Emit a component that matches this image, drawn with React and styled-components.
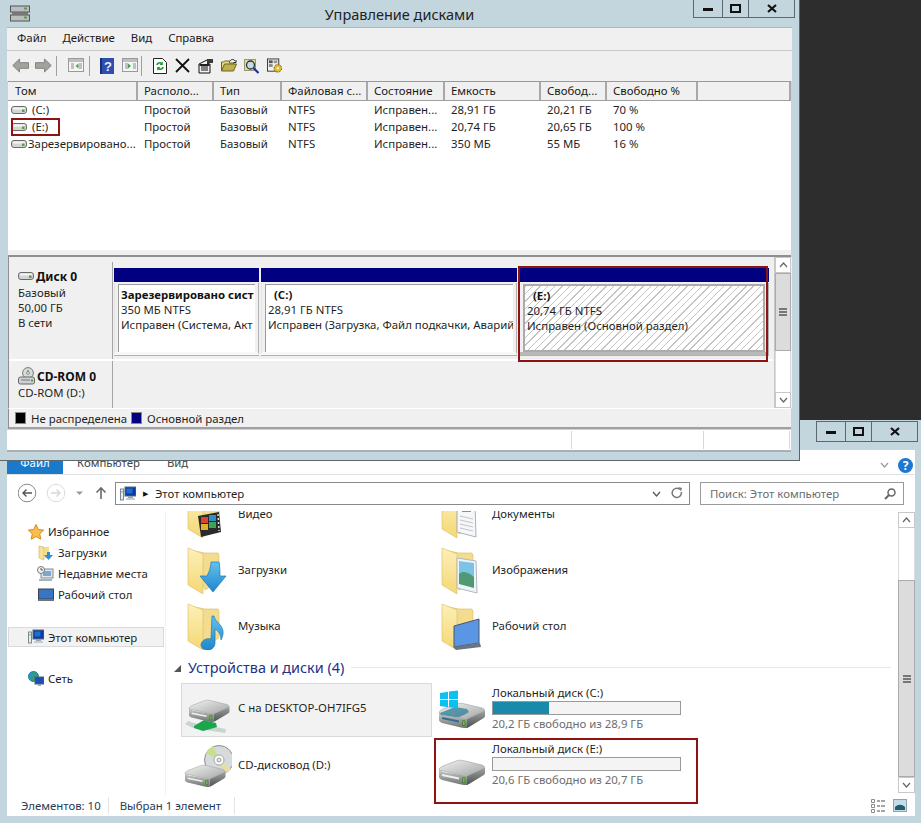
import React from "react";
import styled, { createGlobalStyle } from "styled-components";

const Global = createGlobalStyle`
  html, body { margin: 0; padding: 0; background: #2d2d2d; overflow: hidden; }
  * { box-sizing: border-box; }
  body { font-family: "Noto Sans", "Open Sans", sans-serif; font-size: 11.4px; color: #1a1a1a; }
`;

const Desktop = styled.div`
  position: relative; width: 921px; height: 823px; overflow: hidden; background: #2d2d2d;
`;

/* windows on the desktop */
const DiskWindow = styled.section`
  position: absolute; left: 0; top: 0; width: 800px; height: 461px; z-index: 2;
  background: #c3d6de; border-right: 1px solid #566; border-bottom: 1px solid #5c686e;
  display: flex; flex-direction: column; padding: 0 7px 0 7px;
`;
const ExplorerWindow = styled.section`
  position: absolute; left: 0; top: 420px; width: 921px; height: 403px; z-index: 1;
  background: #c3d6de; display: flex; flex-direction: column; padding: 0 6px 7px 7px;
`;

const TitleBar = styled.header`
  height: 28px; flex: none; position: relative; display: flex; justify-content: center; align-items: center;
  font-size: 14.5px; color: #222; border-bottom: 1px solid #a9b9c0;
`;
const AppGlyph = styled.span`
  position: absolute; left: 2px; top: 5px; display: flex;
`;
const WinButtons = styled.div`
  position: absolute; display: flex; height: ${p => p.$h}px; top: ${p => p.$top}px; left: ${p => p.$left}px;
  border: 1px solid #5c686e; border-top: ${p => (p.$top === 0 ? "none" : "1px solid #5c686e")}; background: #c3d6de;
`;
const WinButton = styled.span`
  width: ${p => p.$w}px; display: flex; align-items: center; justify-content: center;
  & + & { border-left: 1px solid #5c686e; }
`;

const MenuBar = styled.nav`
  height: 23px; flex: none; background: #f0f0f0; border-bottom: 1px solid #c9c9c9;
  display: flex; align-items: center; padding: 0 0 3px 10px; gap: 16px;
`;
const ToolBar = styled.div`
  height: 30px; flex: none; background: #f0f0f0; display: flex; align-items: center; padding-left: 5px;
`;
const ToolSep = styled.span`
  width: 1px; height: 20px; background: #a0a0a0; margin: 0 ${p => p.$r ?? 11}px 0 ${p => p.$l ?? 4}px;
`;
const ToolIcon = styled.span`
  display: flex; width: ${p => p.$w ?? 16}px; height: 16px; margin-right: ${p => p.$m ?? 7}px;
`;

const ListPane = styled.div`
  height: 169px; flex: none; background: #fff; margin: 0 1px 0 1px; display: flex; flex-direction: column;
`;
const colTemplate = "130px 76px 68px 86px 77px 96px 66px 91px 1fr";
const ListHeader = styled.div`
  display: grid; grid-template-columns: ${colTemplate}; height: 20px; flex: none;
  background: #f0f0f0; border-top: 1px solid #9a9a9a; border-bottom: 1px solid #a0a0a0;
`;
const HeadCell = styled.span`
  padding-left: 6px; border-right: 2px solid #a8a8a8; line-height: 18px; white-space: nowrap; overflow: hidden;
  &:first-child { padding-left: 7px; }
`;
const ListRow = styled.div`
  display: grid; grid-template-columns: ${colTemplate}; height: 17px; line-height: 17px;
`;
const ListCell = styled.span`
  padding-left: 6px; white-space: nowrap; overflow: hidden; color: #1f1f1f;
`;
const VolumeCell = styled(ListCell)`
  display: flex; align-items: center; padding-left: 3px; gap: ${p => p.$gap}px;
`;

const Splitter = styled.div`
  height: 7px; flex: none; background: #f0f0f0; border-bottom: 2px solid #8f8f8f; margin: 0 1px;
`;
const DiskPane = styled.div`
  height: 151px; flex: none; display: flex; margin-left: 1px; background: #f0f0f0;
  border-left: 1px solid #8f8f8f;
`;
const DiskColumn = styled.div`
  flex: 1; min-width: 0; display: flex; flex-direction: column;
`;
const DiskRow = styled.div`
  display: flex; height: ${p => p.$h}px; flex: none; padding-top: ${p => p.$pt ?? 0}px;
  border-bottom: ${p => (p.$line ? "2px solid #fff" : "none")};
`;
const DiskLabel = styled.div`
  width: 104px; flex: none; padding: ${p => p.$pt ?? 6}px 0 0 9px; border-right: 1px solid #a4a4a4; line-height: 15px; color: #1f1f1f;
`;
const DiskName = styled.div`
  display: flex; align-items: center; gap: 2px; font-weight: 700; font-size: 12px; height: 16px; margin-bottom: 1px; color: #111;
`;
const PartitionStrip = styled.div`
  flex: 1; display: flex; gap: 2px; padding: 6px 0 0 1px;
`;
const Partition = styled.div`
  width: ${p => p.$w}px; flex: none; display: flex; flex-direction: column;
`;
const PartitionBar = styled.div`
  height: 14px; background: #000080; flex: none;
`;
const PartitionBody = styled.div`
  margin-top: 1px; height: 72px; padding: 1px 3px 0 3px;
  border-bottom: ${p => (p.$sel ? "3px solid #b9b9b9" : "3px solid #f8f8f8")};
  border-right: 1px solid #b0b0b0; border-left: 1px solid #e4e4e4;
  box-shadow: 0 1px 0 #b0b0b0;
`;
const PartitionBox = styled.div`
  height: 68px; line-height: 15px; white-space: nowrap; overflow: hidden; color: #1f1f1f; padding: 2px 0 0 2px;
  background: #fff; border-left: 1px solid #9a9a9a; border-top: 1px solid #9a9a9a;
`;
const HatchBox = styled(PartitionBox)`
  border: 2px solid #ababab;
  background: repeating-linear-gradient(135deg, #c4c4c4 0 1px, #fff 1px 5.2px);
`;
const PartitionTitle = styled.div`
  font-weight: 700; padding-left: ${p => p.$pad ?? 0}px; color: #111;
`;
const PartScroll = styled.div`
  width: 17px; flex: none; margin: 0 1px; display: flex; flex-direction: column; background: #fff; border-left: 1px solid #c8c8c8;
`;
const ScrollArrow = styled.div`
  height: 16px; flex: none; background: #fff; border: 1px solid #c8c8c8; display: flex; align-items: center; justify-content: center;
`;
const ScrollThumb = styled.div`
  height: ${p => p.$h}px; flex: none; background: #dcdcdc; border: 1px solid #ababab; display: flex; align-items: center; justify-content: center;
`;
const ScrollTrack = styled.div`
  flex: ${p => (p.$h ? "none" : "1")}; height: ${p => (p.$h ? `${p.$h}px` : "auto")};
  background: #fff; border-left: 1px solid #dcdcdc; border-right: 1px solid #dcdcdc;
`;
const Legend = styled.div`
  height: 21px; flex: none; display: flex; align-items: center; padding-left: 6px; margin: 0 1px 0 1px;
  background: #f0f0f0; border-left: 1px solid #8f8f8f; border-top: 1px solid #fff; border-bottom: 2px solid #a0a0a0; color: #1f1f1f;
`;
const Swatch = styled.span`
  width: 11px; height: 12px; background: ${p => p.$c}; border: 1px solid #888; margin-right: 5px; flex: none;
`;
const LegendText = styled.span`
  margin-right: 4px;
`;
const StatusRow = styled.div`
  height: 22px; flex: none; margin-top: 1px; background: #fff; border-bottom: 2px solid #a8b0b4; display: grid;
  grid-template-columns: 565px 132px 86px; margin-right: 1px;
`;
const StatusCell = styled.span`
  border-right: 1px solid #d8d8d8; margin: 1px 0;
`;

/* explorer */
const ExplorerChrome = styled.div`
  height: 30px; flex: none; position: relative;
`;
const ExplorerBody = styled.div`
  flex: 1; background: #fff; display: flex; flex-direction: column; min-height: 0;
`;
const RibbonTabs = styled.div`
  height: 25px; flex: none; display: flex; align-items: stretch; border-bottom: 1px solid #e1e1e1; position: relative;
`;
const FileTab = styled.span`
  width: 56px; background: #1979ca; color: #fff; text-align: center; line-height: 26px;
`;
const RibbonTab = styled.span`
  margin-left: ${p => p.$l}px; line-height: 26px; color: #444;
`;
const RibbonTools = styled.span`
  margin-left: auto; display: flex; align-items: center; gap: 9px; padding-right: 2px; padding-top: 6px;
`;
const HelpDot = styled.span`
  width: 15px; height: 15px; border-radius: 50%; background: #1c78d0; color: #fff; font-weight: 700; font-size: 12px;
  display: flex; align-items: center; justify-content: center;
`;
const AddressRow = styled.div`
  height: 36px; flex: none; display: flex; align-items: flex-start; padding: 7px 11px 0 11px;
`;
const NavButtons = styled.span`
  width: 97px; height: 22px; flex: none; display: flex;
`;
const AddressBox = styled.div`
  width: 575px; height: 23px; flex: none; border: 1px solid #8a8a8a; display: flex; align-items: center; padding-left: 4px; color: #1f1f1f;
`;
const Crumb = styled.span`
  margin: 0 0 0 7px; font-size: 7px; color: #111;
`;
const CrumbText = styled.span`
  margin-left: 7px;
`;
const AddressTools = styled.span`
  margin-left: auto; display: flex; align-items: center; gap: 10px; padding-right: 6px;
`;
const SearchBox = styled.div`
  width: 204px; height: 23px; flex: none; margin-left: 10px; border: 1px solid #9a9a9a; display: flex; align-items: center; justify-content: space-between; padding: 0 7px 0 9px; color: #6d6d6d;
`;
const Main = styled.div`
  flex: 1; min-height: 0; display: flex;
`;
const NavPane = styled.aside`
  width: 159px; flex: none; padding-top: 10px; border-right: 1px solid #f2f2f2; color: #1f1f1f;
`;
const NavItem = styled.div`
  height: 21px; display: flex; align-items: center; gap: 4px;
  padding-left: ${p => p.$pl}px; margin-top: ${p => p.$mt ?? 0}px;
`;
const NavSelected = styled(NavItem)`
  background: #f2f2f2; border: 1px solid #dadada; margin-left: 1px; margin-right: 1px; height: 20px;
`;
const ContentPane = styled.div`
  flex: 1; min-width: 0; overflow: hidden; position: relative;
`;
const ContentInner = styled.div`
  margin-top: -25px; padding-left: 8px;
`;
const FolderGrid = styled.div`
  display: grid; grid-template-columns: 254px 254px; padding-left: 12px; grid-auto-rows: 56px;
`;
const FolderItem = styled.div`
  display: flex; align-items: center; gap: 4px; color: #1f1f1f;
`;
const TileLabel = styled.span`
  margin-top: ${p => p.$up ?? -2}px; white-space: nowrap;
`;
const GroupHeader = styled.div`
  height: 24px; margin-top: 1px; display: flex; align-items: center; color: #1e3287; font-size: 14.4px; width: 717px;
`;
const GroupTriangle = styled.span`
  width: 0; height: 0; border-left: 7px solid transparent; border-bottom: 7px solid #555; margin: 2px 7px 0 0;
`;
const GroupRule = styled.span`
  flex: 1; height: 1px; background: #e2e8f0; margin-left: 7px;
`;
const DriveGrid = styled.div`
  display: grid; grid-template-columns: 254px 254px; grid-auto-rows: 54px; row-gap: 2px; margin-top: 4px; padding-left: 7px;
`;
const DriveTile = styled.div`
  width: 251px; display: flex; align-items: ${p => (p.$top ? "flex-start" : "center")}; padding-left: 2px; gap: 6px; color: #1f1f1f;
  background: ${p => (p.$selected ? "#f2f2f2" : "transparent")}; border: 1px solid ${p => (p.$selected ? "#dadada" : "transparent")};
`;
const DriveInfo = styled.div`
  display: flex; flex-direction: column; padding-top: 1px;
`;
const DriveName = styled.div`
  line-height: 16px; height: 16px; color: #1f1f1f;
`;
const Capacity = styled.div`
  width: 189px; height: 14px; border: 1px solid #9a9a9a; background: #f4f4f4;
`;
const CapacityFill = styled.div`
  height: 100%; background: #1a8aab;
`;
const DriveFree = styled.div`
  line-height: 17px; color: #6d6d6d;
`;
const VScroll = styled.div`
  width: 17px; flex: none; margin: 1px 0; display: flex; flex-direction: column;
`;
const BottomBar = styled.div`
  height: 21px; flex: none; display: flex; align-items: center; color: #2a3a55; padding-left: 14px;
`;
const BarText = styled.span`
  padding-right: ${p => p.$r}px; margin-right: 11px; border-right: 1px solid #e4e4e4; height: 17px; line-height: 17px;
`;
const BarViews = styled.span`
  margin-left: auto; display: flex; gap: 7px; padding-right: 8px; align-items: center;
`;

/* annotations over the screenshot */
const Marker = styled.div`
  position: absolute; z-index: 5; left: ${p => p.$x}px; top: ${p => p.$y}px; width: ${p => p.$w}px; height: ${p => p.$h}px;
  border: 2px solid #8e1414; pointer-events: none;
`;

/* drawings */
const MinGlyph = () => <svg width="10" height="4"><rect y="1" width="10" height="3" fill="#111" /></svg>;
const MaxGlyph = () => <svg width="11" height="9"><rect x="1" y="1" width="9" height="7" fill="none" stroke="#111" strokeWidth="2" /></svg>;
const CloseGlyph = () => <svg width="10" height="9"><path d="M1 1l8 7M9 1L1 8" stroke="#111" strokeWidth="2.2" /></svg>;

const Chev = ({ up, color = "#666" }) => (
  <svg width="9" height="6"><path d={up ? "M1 5l3.500-4L8 5" : "M1 1l3.500 4L8 1"} fill="none" stroke={color} strokeWidth="1.2" /></svg>
);
const Grip = () => (
  <svg width="8" height="8"><path d="M0 1h8M0 4h8M0 7h8" stroke="#555" strokeWidth="1.4" /></svg>
);
const SmallDrive = () => (
  <svg width="16" height="10" viewBox="0 0 16 10" style={{ flex: "none" }}>
    <rect x="0.5" y="1.500" width="15" height="7" rx="2.500" fill="#d4d6d6" stroke="#6a6a6a" />
    <rect x="2" y="2.500" width="12" height="2" rx="1" fill="#f4f4f4" />
    <rect x="11" y="4.500" width="2.500" height="2.500" fill="#55a13a" />
  </svg>
);
const CdSmall = () => (
  <svg width="17" height="18" viewBox="0 0 17 18" style={{ flex: "none" }}>
    <circle cx="10" cy="6" r="5.400" fill="#d8dcdc" stroke="#777" />
    <circle cx="10" cy="6" r="1.400" fill="#fff" stroke="#888" />
    <path d="M10 3v2" stroke="#5aa845" strokeWidth="1.500" />
    <rect x="0.5" y="10" width="16" height="7" rx="2" fill="#cfd2d2" stroke="#666" />
    <path d="M3 13h9" stroke="#777" />
    <rect x="13" y="12.500" width="2" height="2" fill="#55a13a" />
  </svg>
);
const AppIcon = () => (
  <svg width="22" height="18" viewBox="0 0 22 18">
    <rect x="1.500" y="1" width="19" height="6" fill="#b9bec0" stroke="#555" />
    <rect x="1.500" y="10" width="19" height="6" fill="#b9bec0" stroke="#555" />
    <rect x="3" y="7" width="16" height="3" fill="#777" />
    <rect x="15" y="2.500" width="3" height="2" fill="#53a245" />
    <rect x="15" y="11.500" width="3" height="2" fill="#53a245" />
  </svg>
);
const Arrow = ({ flip }) => (
  <svg width="17" height="15" viewBox="0 0 17 15" style={{ transform: flip ? "scaleX(-1)" : "none" }}>
    <path d="M.8 7.500L7.500 1v3.700h9v5.600h-9V14z" fill="#a0a39e" stroke="#82847f" />
  </svg>
);
const PaneIcon = ({ right }) => (
  <svg width="16" height="14" viewBox="0 0 16 14">
    <rect x=".5" y=".5" width="15" height="13" fill="#f4f6f6" stroke="#9a9a9a" />
    <rect x="1" y="1" width="14" height="3" fill="#b8c0c4" />
    <path d="M3 6h3M3 8h3M3 10h3" stroke="#8a8a8a" />
    <path d={right ? "M6 5.500L9 8l-3 2.500z" : "M10.500 5.500L7.500 8l3 2.500z"} fill="#4c9a56" />
    <path d="M11 6h3M11 8h3M11 10h3" stroke="#8a8a8a" />
  </svg>
);
const HelpBook = () => (
  <svg width="14" height="16" viewBox="0 0 14 16">
    <rect width="14" height="16" fill="#2c4fb0" />
    <rect width="2" height="16" fill="#1b2f78" />
    <text x="8" y="13" fontFamily="Liberation Sans, sans-serif" fontSize="13" fontWeight="700" fill="#e8eefc" textAnchor="middle">?</text>
  </svg>
);
const RefreshDoc = () => (
  <svg width="14" height="16" viewBox="0 0 14 16">
    <path d="M.5.500h9l4 4v11H.5z" fill="#fff" stroke="#222" />
    <path d="M4 7c0-2 3-3 5-1.500M10 9c0 2-3 3-5 1.500" fill="none" stroke="#1f9a2e" strokeWidth="1.700" />
    <path d="M9.800 3.500v3.500H6.500zM4.200 12.500V9h3.300z" fill="#1f9a2e" />
  </svg>
);
const XIcon = () => <svg width="15" height="15"><path d="M1 1l13 13M14 1L1 14" stroke="#111" strokeWidth="1.800" /></svg>;
const PropsIcon = () => (
  <svg width="16" height="16" viewBox="0 0 16 16">
    <path d="M1 6l8-4 2 3-2 1h3v9H1z" fill="#f2f2f2" stroke="#111" />
    <path d="M3 8h7M3 10h7M3 12h7" stroke="#111" />
    <rect x="9" y="1" width="6" height="4" fill="#3a3a3a" />
    <rect x="1.500" y="6" width="10" height="2" fill="#222" />
  </svg>
);
const OpenIcon = () => (
  <svg width="16" height="14" viewBox="0 0 16 14">
    <path d="M.5 13V4h2l1-1h5v2h4v2" fill="#e8d988" stroke="#6d6420" />
    <path d="M.5 13l3-7h12l-3 7z" fill="#bdb24a" stroke="#6d6420" />
    <path d="M9 3C10 1 13 1 14 3" fill="none" stroke="#222" />
    <path d="M15 2v2.500h-2.500" fill="none" stroke="#222" />
  </svg>
);
const FindIcon = () => (
  <svg width="16" height="16" viewBox="0 0 16 16">
    <rect x=".5" y="1.500" width="11" height="11" fill="#e2dca0" stroke="#9a9a6a" />
    <circle cx="6.500" cy="7" r="4" fill="#bfe0e8" stroke="#333" strokeWidth="1.300" />
    <path d="M9.500 10l5 5" stroke="#1a2ea0" strokeWidth="2.200" />
  </svg>
);
const GearIcon = () => (
  <svg width="17" height="16" viewBox="0 0 17 16">
    <rect x=".5" y=".5" width="12" height="13" fill="#f2f2f2" stroke="#333" />
    <rect x="2" y="2" width="4" height="3" fill="#555" />
    <rect x="7" y="2" width="4" height="3" fill="#999" />
    <rect x="2" y="6" width="4" height="3" fill="#888" />
    <circle cx="11.500" cy="10.500" r="4" fill="#e3bd2e" stroke="#6b5a10" strokeDasharray="2 1" />
    <circle cx="11.500" cy="10.500" r="1.200" fill="#fff" />
  </svg>
);

const FolderBack = () => (
  <>
    <path d="M4 4l15 3h0l13 0 1 2v27l-14 8z" fill="#f3dc8d" stroke="#d9bd62" strokeWidth=".6" />
    <path d="M2 2l15 6v40L2 39z" fill="url(#fld)" stroke="#d8bc68" strokeWidth=".6" />
  </>
);
const overlays = {
  video: (
    <g>
      <path d="M12 26l21-4 2 20-20 5z" fill="#2a2a2a" />
      <rect x="15" y="27" width="7" height="6" fill="#d6472b" />
      <rect x="23" y="25" width="7" height="6" fill="#2f8fc9" />
      <rect x="15" y="34" width="7" height="6" fill="#e0b02c" />
      <rect x="23" y="32" width="7" height="6" fill="#3ea552" />
      <path d="M32 24l1 17" stroke="#ddd" strokeWidth="1.500" strokeDasharray="2 2" />
    </g>
  ),
  down: (
    <path d="M25 16h8c1 6 1 10 1 14h6L27 46 14 30h7c2-4 4-9 4-14z" fill="url(#blue)" stroke="#1b78b8" strokeWidth=".7" />
  ),
  music: (
    <g fill="url(#blue)" stroke="#1b78b8" strokeWidth=".7">
      <path d="M26 14l2 0c1 6 8 8 9 15 .5 4-1 7-2 9 0-5-2-9-6-11v14c0 5-5 8-9 7-5-1-6-5-4-8 2-3 6-4 9-3z" />
    </g>
  ),
  docs: (
    <g>
      <path d="M17 10l18 4 1 33-19-5z" fill="#f6f7f8" stroke="#aab0ba" />
      <rect x="22" y="15" width="9" height="7" fill="#6b9ab5" />
      <path d="M20 26l13 3M20 30l13 3M20 34l13 3M20 38l13 3" stroke="#c2c6cc" />
    </g>
  ),
  image: (
    <g>
      <path d="M17 12l19 3 1 32-20-5z" fill="#eef4f8" stroke="#aeb8c0" />
      <path d="M19 15l15 2v14l-15-3z" fill="#7cc4e6" />
      <path d="M19 28c5-4 10-1 15 3v11l-15-4z" fill="#4f9a72" />
    </g>
  ),
  desktop: (
    <g>
      <path d="M14 24l25-7v24l-25 4z" fill="#5b96e4" stroke="#4c5664" />
      <path d="M13 45l27-4 1 4-25 3z" fill="#6b7480" />
    </g>
  ),
};
const FolderIcon = ({ kind }) => (
  <svg width="48" height="48" viewBox="0 0 48 48" style={{ flex: "none" }}>
    <defs>
      <linearGradient id="fld" x1="0" x2="0" y1="0" y2="1">
        <stop offset="0" stopColor="#fdf0b8" />
        <stop offset="1" stopColor="#f4d875" />
      </linearGradient>
      <linearGradient id="blue" x1="0" x2="0" y1="0" y2="1">
        <stop offset="0" stopColor="#62c1ee" />
        <stop offset="1" stopColor="#1f86cc" />
      </linearGradient>
    </defs>
    <FolderBack />
    {overlays[kind]}
  </svg>
);

/* isometric silver drive: 47 wide, 25 tall, origin at its top-left */
const DriveArt = ({ x = 1, y = 0, scale = 1, stripe = "#eef0ee" }) => (
  <g transform={`translate(${x} ${y}) scale(${scale})`}>
    <defs>
      <linearGradient id="drvTop" x1="0" x2="1" y1="0" y2="1">
        <stop offset="0" stopColor="#f2f3f1" />
        <stop offset="1" stopColor="#a2a6a4" />
      </linearGradient>
      <linearGradient id="drvLeft" x1="0" x2="0" y1="0" y2="1">
        <stop offset="0" stopColor="#c6c9c7" />
        <stop offset="1" stopColor="#6f7371" />
      </linearGradient>
      <linearGradient id="drvRight" x1="0" x2="0" y1="0" y2="1">
        <stop offset="0" stopColor="#a0a4a2" />
        <stop offset="1" stopColor="#4c504e" />
      </linearGradient>
    </defs>
    <path d="M0 10c0 0 2 1 4 2l20 3.500c2 .5 3 .5 4 .5v9c-2 0-4 0-6-.5L3 20c-2-1-3-2-3-3z" fill="url(#drvLeft)" />
    <path d="M28 16L46 7.500V13c0 1-1 2-2 2.500L30 24c-1 .5-1.500 1-2 1z" fill="url(#drvRight)" />
    <path d="M0 10c0-2 2-3 4-4L17 1c2-1 5-1 7-.5L43 5c3 1 3 3 1 4L30 15c-2 1-4 1-6 .5z" fill="url(#drvTop)" stroke="#8f9391" strokeWidth=".5" />
    <path d="M3 15l17 3.500" stroke={stripe} strokeWidth="1.800" fill="none" />
    <rect x="23.500" y="17.500" width="2.500" height="5" rx=".8" fill="#69c63c" stroke="#1e5a14" strokeWidth=".5" />
  </g>
);
const NetShareDrive = () => (
  <svg width="48" height="48" viewBox="0 0 48 48" style={{ flex: "none" }}>
    <DriveArt x={5} y={14} scale={0.88} />
    <path d="M1 38l8 4 32 5 1-4-32-6-6-2z" fill="#c9d4cd" />
    <path d="M10 40l10-6 3 1 9 2 1 4-10 3-4 1-9-3z" fill="#19a64c" />
  </svg>
);
const CdDrive = () => (
  <svg width="48" height="48" viewBox="0 0 48 48" style={{ flex: "none" }}>
    <circle cx="35" cy="18" r="14.500" fill="#d6dadb" stroke="#8e8e8e" />
    <path d="M35 18L22 11a15 15 0 0 1 7-7z" fill="#c8e08a" />
    <path d="M35 18l12 9a15 15 0 0 1-6 4z" fill="#e6e0a0" />
    <circle cx="35" cy="18" r="5" fill="#fff" stroke="#a8a8a8" />
    <circle cx="35" cy="18" r="2" fill="#e8e8e8" stroke="#999" />
    <DriveArt x={1} y={23} scale={0.88} />
  </svg>
);
const WinDrive = () => (
  <svg width="48" height="48" viewBox="0 0 48 48" style={{ flex: "none" }}>
    <DriveArt x={1} y={19} stripe="#2f6f8f" />
    <path d="M2 29l15-6 12 2 2 3c-6 4-11 6-14 5L3 31z" fill="#2f7f9c" opacity=".75" />
    <path d="M2 9l8-1.200V15H2zM11 7.600L20 6.500V15h-9zM2 16h8v7.200L2 22zM11 16h9v8.500l-9-1.200z" fill="#0ec0f0" />
  </svg>
);
const PlainDrive = () => (
  <svg width="48" height="48" viewBox="0 0 48 48" style={{ flex: "none" }}>
    <DriveArt x={1} y={20} />
  </svg>
);

const Star = () => (
  <svg width="16" height="16" viewBox="0 0 16 16"><path d="M8 .5l2.300 5 5.400.6-4 3.700 1.100 5.400L8 12.500l-4.800 2.700 1.100-5.400-4-3.700 5.400-.6z" fill="#f7bf4a" stroke="#d98a1e" /></svg>
);
const SmallFolder = () => (
  <svg width="16" height="16" viewBox="0 0 16 16">
    <path d="M1 1l5 1v13l-5-2z" fill="#f6e39b" stroke="#cfae58" strokeWidth=".6" />
    <path d="M6 2h5v11H6z" fill="#f3dc8d" />
    <path d="M9 7h3v3h3l-4.500 5L6 10h3z" fill="#2f8fd6" />
  </svg>
);
const Recent = () => (
  <svg width="17" height="16" viewBox="0 0 17 16">
    <rect x="4" y="3" width="12" height="9" fill="#dde6ee" stroke="#7d8a96" />
    <rect x="6" y="5" width="8" height="5" fill="#7fa8cc" />
    <rect x="2" y="13" width="13" height="2" fill="#aab2ba" />
    <circle cx="4" cy="4" r="3.500" fill="#f4f4f4" stroke="#777" />
    <path d="M4 2v2h2" stroke="#555" fill="none" />
  </svg>
);
const Desk = () => (
  <svg width="16" height="14" viewBox="0 0 16 14">
    <rect x=".5" y="1" width="15" height="10" fill="#3a74c4" stroke="#39424e" />
    <rect x="0" y="11" width="16" height="2" fill="#6b7480" />
  </svg>
);
const Pc = () => (
  <svg width="16" height="16" viewBox="0 0 16 16" style={{ flex: "none" }}>
    <rect x="5" y="1" width="11" height="9" fill="#10399c" stroke="#5b6b7a" />
    <rect x="6.500" y="2.500" width="6" height="5" fill="#1c6fd6" />
    <rect x="8" y="10" width="5" height="2" fill="#9aa4ac" />
    <rect x="6" y="12" width="9" height="2" fill="#c5ccd2" />
    <rect x="0.500" y="3" width="3" height="11" fill="#e8ecee" stroke="#7b8894" />
    <rect x="1.500" y="5" width="1" height="1.500" fill="#3ca24a" />
  </svg>
);
const Net = () => (
  <svg width="16" height="16" viewBox="0 0 16 16">
    <circle cx="5.500" cy="5.500" r="5" fill="#35a06a" stroke="#1a7ea8" />
    <path d="M2 4c2-2 4-1 4 1s-3 2-4 1zM7 8l3-2" stroke="#2d8fd4" strokeWidth="1.500" fill="none" />
    <rect x="7" y="6" width="9" height="7" fill="#1b4fb4" stroke="#55606c" />
    <rect x="10" y="13" width="3" height="2" fill="#9aa4ac" />
  </svg>
);
const NavStrip = () => (
  <svg width="97" height="22" viewBox="0 0 97 22">
    <circle cx="9" cy="11" r="8.800" fill="#fff" stroke="#8a8a8a" />
    <path d="M14 11H5M8.500 7.500L5 11l3.500 3.500" fill="none" stroke="#555" strokeWidth="1.400" />
    <circle cx="38" cy="11" r="8.800" fill="#fff" stroke="#dcdcdc" />
    <path d="M33 11h9M38.500 7.500L42 11l-3.500 3.500" fill="none" stroke="#d8d8d8" strokeWidth="1.400" />
    <path d="M58 9.500h7l-3.500 3.500z" fill="#9a9a9a" />
    <path d="M83 17V6M78.500 10.500L83 5.800l4.500 4.700" fill="none" stroke="#6a6a6a" strokeWidth="1.600" />
  </svg>
);
const Refresh = () => (
  <svg width="12" height="13" viewBox="0 0 12 13">
    <path d="M10.300 5a4.600 4.600 0 1 1-1.400-2.500" fill="none" stroke="#777" strokeWidth="1.500" />
    <path d="M7.500 0l3.500 1-1 3.500z" fill="#777" />
  </svg>
);
const Magnifier = () => (
  <svg width="12" height="12" viewBox="0 0 12 12">
    <circle cx="7.500" cy="4.500" r="3.500" fill="none" stroke="#666" strokeWidth="1.500" />
    <path d="M5 7l-4 4" stroke="#666" strokeWidth="2" />
  </svg>
);
const DetailsView = () => (
  <svg width="15" height="14" viewBox="0 0 15 14">
    <path d="M.5.500h3v3h-3zM.5 5.500h3v3h-3zM.5 10.500h3v3h-3z" fill="#fff" stroke="#8a8a8a" />
    <path d="M6 2h3M10 2h4M6 7h3M10 7h4M6 12h3M10 12h4" stroke="#444a55" />
  </svg>
);
const TilesView = () => (
  <svg width="14" height="13" viewBox="0 0 14 13">
    <rect x=".5" y=".5" width="13" height="12" fill="#c6dcea" stroke="#8fa4b2" />
    <path d="M2 8c3-3 7-3 10 0v3H2z" fill="#1f5e6a" />
  </svg>
);

const volumes = [
  { name: "(C:)", gap: 5, cells: ["Простой", "Базовый", "NTFS", "Исправен...", "28,91 ГБ", "20,21 ГБ", "70 %"] },
  { name: "(E:)", gap: 5, cells: ["Простой", "Базовый", "NTFS", "Исправен...", "20,74 ГБ", "20,65 ГБ", "100 %"] },
  { name: "Зарезервировано...", gap: 1, cells: ["Простой", "Базовый", "NTFS", "Исправен...", "350 МБ", "55 МБ", "16 %"] },
];
const heads = ["Том", "Располо...", "Тип", "Файловая с...", "Состояние", "Емкость", "Свобод...", "Свободно %", ""];
const folders = [
  ["video", "Видео"], ["docs", "Документы"],
  ["down", "Загрузки"], ["image", "Изображения"],
  ["music", "Музыка"], ["desktop", "Рабочий стол"],
];

export default function App() {
  return (
    <Desktop>
      <Global />
      <DiskWindow>
        <TitleBar>
          <AppGlyph><AppIcon /></AppGlyph>
          Управление дисками
          <WinButtons $top={0} $left={686} $h={18}>
            <WinButton $w={28}><MinGlyph /></WinButton>
            <WinButton $w={26}><MaxGlyph /></WinButton>
            <WinButton $w={46}><CloseGlyph /></WinButton>
          </WinButtons>
        </TitleBar>
        <MenuBar>
          <span>Файл</span><span>Действие</span><span>Вид</span><span>Справка</span>
        </MenuBar>
        <ToolBar>
          <ToolIcon $w={17} $m={6}><Arrow /></ToolIcon>
          <ToolIcon $w={17} $m={6}><Arrow flip /></ToolIcon>
          <ToolSep $l={-2} />
          <ToolIcon><PaneIcon /></ToolIcon>
          <ToolSep $l={-2} $r={10} />
          <ToolIcon $w={14} $m={8}><HelpBook /></ToolIcon>
          <ToolIcon $m={6}><PaneIcon right /></ToolIcon>
          <ToolSep $l={-3} />
          <ToolIcon $w={14} $m={8}><RefreshDoc /></ToolIcon>
          <ToolIcon $m={7}><XIcon /></ToolIcon>
          <ToolIcon><PropsIcon /></ToolIcon>
          <ToolIcon><OpenIcon /></ToolIcon>
          <ToolIcon><FindIcon /></ToolIcon>
          <ToolIcon><GearIcon /></ToolIcon>
        </ToolBar>
        <ListPane>
          <ListHeader>
            {heads.map((h, i) => <HeadCell key={i}>{h}</HeadCell>)}
          </ListHeader>
          {volumes.map(v => (
            <ListRow key={v.name}>
              <VolumeCell $gap={v.gap}><SmallDrive />{v.name}</VolumeCell>
              {v.cells.map((c, i) => <ListCell key={i}>{c}</ListCell>)}
              <span />
            </ListRow>
          ))}
        </ListPane>
        <Splitter />
        <DiskPane>
          <DiskColumn>
            <DiskRow $h={104} $pt={5} $line>
              <DiskLabel $pt={6}>
                <DiskName><SmallDrive />Диск 0</DiskName>
                <div>Базовый</div><div>50,00 ГБ</div><div>В сети</div>
              </DiskLabel>
              <PartitionStrip>
                <Partition $w={145}>
                  <PartitionBar />
                  <PartitionBody>
                    <PartitionBox>
                      <PartitionTitle>Зарезервировано сист</PartitionTitle>
                      <div>350 МБ NTFS</div>
                      <div>Исправен (Система, Акт</div>
                    </PartitionBox>
                  </PartitionBody>
                </Partition>
                <Partition $w={256}>
                  <PartitionBar />
                  <PartitionBody>
                    <PartitionBox>
                      <PartitionTitle $pad={6}>(C:)</PartitionTitle>
                      <div>28,91 ГБ NTFS</div>
                      <div>Исправен (Загрузка, Файл подкачки, Аварий</div>
                    </PartitionBox>
                  </PartitionBody>
                </Partition>
                <Partition $w={250}>
                  <PartitionBar />
                  <PartitionBody $sel>
                    <HatchBox>
                      <PartitionTitle $pad={6}>(E:)</PartitionTitle>
                      <div>20,74 ГБ NTFS</div>
                      <div>Исправен (Основной раздел)</div>
                    </HatchBox>
                  </PartitionBody>
                </Partition>
              </PartitionStrip>
            </DiskRow>
            <DiskRow $h={47}>
              <DiskLabel $pt={7}>
                <DiskName><CdSmall />CD-ROM 0</DiskName>
                <div>CD-ROM (D:)</div>
              </DiskLabel>
            </DiskRow>
          </DiskColumn>
          <PartScroll>
            <ScrollArrow><Chev up /></ScrollArrow>
            <ScrollThumb $h={78}><Grip /></ScrollThumb>
            <ScrollTrack />
            <ScrollArrow><Chev /></ScrollArrow>
          </PartScroll>
        </DiskPane>
        <Legend>
          <Swatch $c="#000" /><LegendText>Не распределена</LegendText>
          <Swatch $c="#000080" /><LegendText>Основной раздел</LegendText>
        </Legend>
        <StatusRow>
          <StatusCell /><StatusCell /><StatusCell />
        </StatusRow>
      </DiskWindow>

      <ExplorerWindow>
        <ExplorerChrome>
          <WinButtons $top={1} $left={809} $h={21}>
            <WinButton $w={28}><MinGlyph /></WinButton>
            <WinButton $w={26}><MaxGlyph /></WinButton>
            <WinButton $w={46}><CloseGlyph /></WinButton>
          </WinButtons>
        </ExplorerChrome>
        <ExplorerBody>
          <RibbonTabs>
            <FileTab>Файл</FileTab>
            <RibbonTab $l={14}>Компьютер</RibbonTab>
            <RibbonTab $l={27}>Вид</RibbonTab>
            <RibbonTools><Chev color="#999" /><HelpDot>?</HelpDot></RibbonTools>
          </RibbonTabs>
          <AddressRow>
            <NavButtons><NavStrip /></NavButtons>
            <AddressBox>
              <Pc />
              <Crumb>▶</Crumb>
              <CrumbText>Этот компьютер</CrumbText>
              <AddressTools><Chev color="#555" /><Refresh /></AddressTools>
            </AddressBox>
            <SearchBox>Поиск: Этот компьютер<Magnifier /></SearchBox>
          </AddressRow>
          <Main>
            <NavPane>
              <NavItem $pl={21}><Star />Избранное</NavItem>
              <NavItem $pl={31}><SmallFolder />Загрузки</NavItem>
              <NavItem $pl={30}><Recent />Недавние места</NavItem>
              <NavItem $pl={31}><Desk />Рабочий стол</NavItem>
              <NavSelected $pl={19} $mt={22}><Pc />Этот компьютер</NavSelected>
              <NavItem $pl={21} $mt={21}><Net />Сеть</NavItem>
            </NavPane>
            <ContentPane>
              <ContentInner>
                <FolderGrid>
                  {folders.map(([k, label]) => (
                    <FolderItem key={label}><FolderIcon kind={k} /><TileLabel>{label}</TileLabel></FolderItem>
                  ))}
                </FolderGrid>
                <GroupHeader><GroupTriangle />Устройства и диски (4)<GroupRule /></GroupHeader>
                <DriveGrid>
                  <DriveTile $selected>
                    <NetShareDrive /><TileLabel $up={-5}>С на DESKTOP-OH7IFG5</TileLabel>
                  </DriveTile>
                  <DriveTile $top>
                    <WinDrive />
                    <DriveInfo>
                      <DriveName>Локальный диск (C:)</DriveName>
                      <Capacity><CapacityFill style={{ width: "30%" }} /></Capacity>
                      <DriveFree>20,2 ГБ свободно из 28,9 ГБ</DriveFree>
                    </DriveInfo>
                  </DriveTile>
                  <DriveTile>
                    <CdDrive /><TileLabel $up={-4}>CD-дисковод (D:)</TileLabel>
                  </DriveTile>
                  <DriveTile $top>
                    <PlainDrive />
                    <DriveInfo>
                      <DriveName>Локальный диск (E:)</DriveName>
                      <Capacity><CapacityFill style={{ width: "0%" }} /></Capacity>
                      <DriveFree>20,6 ГБ свободно из 20,7 ГБ</DriveFree>
                    </DriveInfo>
                  </DriveTile>
                </DriveGrid>
              </ContentInner>
            </ContentPane>
            <VScroll>
              <ScrollArrow><Chev up /></ScrollArrow>
              <ScrollTrack $h={52} />
              <ScrollThumb $h={197}><Grip /></ScrollThumb>
              <ScrollArrow><Chev /></ScrollArrow>
            </VScroll>
          </Main>
          <BottomBar>
            <BarText $r={7}>Элементов: 10</BarText>
            <BarText $r={13}>Выбран 1 элемент</BarText>
            <BarViews><DetailsView /><TilesView /></BarViews>
          </BottomBar>
        </ExplorerBody>
      </ExplorerWindow>

      <Marker $x={11} $y={118} $w={49} $h={18} />
      <Marker $x={518} $y={266} $w={250} $h={96} />
      <Marker $x={434} $y={738} $w={264} $h={66} />
    </Desktop>
  );
}
